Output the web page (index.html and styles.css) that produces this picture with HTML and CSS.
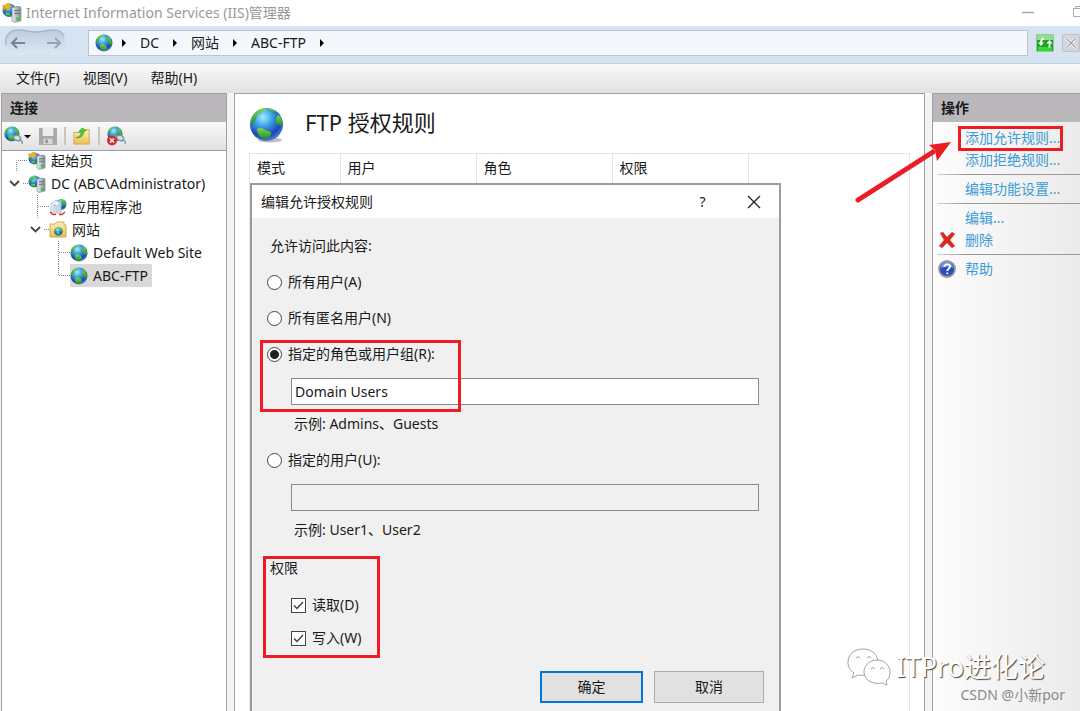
FILE: index.html
```html
<!DOCTYPE html>
<html lang="zh-CN">

<head>
    <meta charset="UTF-8">
    <meta name="viewport" content="width=device-width, initial-scale=1.0">
    <title>Internet Information Services (IIS)管理器</title>
    <link rel="stylesheet" href="styles.css">
</head>

<body>

    <!-- Shared icons -->
    <svg class="sprite" aria-hidden="true">
        <defs>
            <radialGradient id="sea" cx="0.4" cy="0.28" r="0.75">
                <stop offset="0" stop-color="#a5ecff" />
                <stop offset="0.35" stop-color="#3fa5e6" />
                <stop offset="0.75" stop-color="#1b45b4" />
                <stop offset="1" stop-color="#5a86d8" />
            </radialGradient>
            <linearGradient id="land" x1="0" y1="0" x2="0" y2="1">
                <stop offset="0" stop-color="#7fd84a" />
                <stop offset="1" stop-color="#1a8f2c" />
            </linearGradient>
            <linearGradient id="metal" x1="0" y1="0" x2="1" y2="0">
                <stop offset="0" stop-color="#eef2f4" />
                <stop offset="1" stop-color="#7d8b93" />
            </linearGradient>
            <linearGradient id="paper" x1="0" y1="0" x2="0" y2="1">
                <stop offset="0" stop-color="#fff0b0" />
                <stop offset="1" stop-color="#e9bf55" />
            </linearGradient>
        </defs>
        <symbol id="globe-large" viewBox="0 0 36 36">
            <ellipse cx="21" cy="33" rx="12" ry="2.500" fill="#000" opacity="0.25" />
            <circle cx="17.500" cy="17.500" r="16.500" fill="url(#sea)" />
            <path d="M2 13C4 7 8 3 13 1.500L18 2L17 4L13 4L11 7L9 6L8 9L6 14L2 18Z" fill="url(#land)" />
            <path d="M20 1.500L27 4L25 6L21 4Z" fill="url(#land)" />
            <path d="M29 8L32 10L34 17L32 19L28 17L27 12Z" fill="url(#land)" />
            <path d="M8 22C11 20 14 21 16 23L22 25C23 28 19 32 16 32C11 31 8 27 8 22Z" fill="url(#land)" />
        </symbol>
        <symbol id="globe" viewBox="0 0 18 18">
            <circle cx="9" cy="9" r="8.500" fill="url(#sea)" />
            <path d="M1 6C2 3 5 1 8 0.500L7 3L4 4L4 7L2 8L1 11Z" fill="url(#land)" />
            <path d="M12 1.500C15 3 17 6 17 9L16 12L14 10L13 8L11 6L13 4Z" fill="url(#land)" />
            <path d="M5 11L8 10L11 12L12 14L10 17L7 16.500L5 14Z" fill="url(#land)" />
        </symbol>
        <symbol id="server" viewBox="0 0 18 18">
            <circle cx="6.500" cy="6.500" r="6" fill="url(#sea)" />
            <path d="M1 6C1 3 4 1 7 1L7 4L4 5L3 8Z" fill="url(#land)" />
            <path d="M3 9L7 9L8 12L4 12Z" fill="url(#land)" />
            <path d="M9 4L15 3L17 4L17 16L11 17.500L9 16Z" fill="url(#metal)" stroke="#7f8b90" stroke-width="0.7" />
            <path d="M11 7L16 6.500M11 9.500L16 9" stroke="#5f6c72" stroke-width="0.9" />
            <rect x="13" y="13" width="2.500" height="2.500" fill="#39c334" />
        </symbol>
        <symbol id="start" viewBox="0 0 18 18">
            <use href="#server" width="18" height="18" />
            <path d="M0 2L3 2L5 0L7 2L9 2L7 4L7 6L4 5L1 6L2 4Z" fill="#f6b21c" stroke="#d98c0b" stroke-width="0.4" />
        </symbol>
        <symbol id="pool" viewBox="0 0 18 18">
            <circle cx="12" cy="6.500" r="5.500" fill="url(#sea)" />
            <path d="M13 1L17 4L17 8L14 8L12 4Z" fill="url(#land)" />
            <path d="M2 6L7 2L12 6L12 15L2 15Z" fill="#edf4fb" stroke="#9cb3c8" stroke-width="0.8" />
            <path d="M5 14V7H7V14M9 14V7H11V14" fill="#fff" stroke="#8ea2b5" stroke-width="0.8" />
            <path d="M1 14L4 16.500H7M16 14L13 16.500H10" fill="none" stroke="#d33" stroke-width="1.500" />
        </symbol>
        <symbol id="sites" viewBox="0 0 18 18">
            <path d="M1 3H6L8 1H15V4H17V16H1Z" fill="url(#paper)" stroke="#c79b3b" stroke-width="0.8" />
            <use href="#globe" x="5" y="6" width="9" height="9" />
        </symbol>
        <symbol id="connect" viewBox="0 0 20 20">
            <use href="#globe" width="16" height="16" />
            <path d="M9 10L14 9L17 12L15 15L11 14ZM15 14C18 14 19 16 18 18" fill="#d3e2ea" stroke="#7892a0" stroke-width="1.300" />
        </symbol>
        <symbol id="caret" viewBox="0 0 6 10">
            <path d="M1 1L5 5L1 9Z" fill="#000" />
        </symbol>
        <!-- Tree guides: through line, last line, expanded node -->
        <symbol id="guide-first" viewBox="0 0 22 23">
            <path d="M21 11.500H10.500V23" fill="none" stroke="#888" stroke-dasharray="1 1" />
        </symbol>
        <symbol id="guide-mid" viewBox="0 0 22 23">
            <path d="M10.500 0V23M11 11.500H22" fill="none" stroke="#888" stroke-dasharray="1 1" />
        </symbol>
        <symbol id="guide-last" viewBox="0 0 22 23">
            <path d="M10.500 0V11.500H22" fill="none" stroke="#888" stroke-dasharray="1 1" />
        </symbol>
        <symbol id="guide-open" viewBox="0 0 22 23">
            <path d="M4 9L8.500 13.500L13 9" fill="none" stroke="#444" stroke-width="1.800" />
            <path d="M17 11.500H22" stroke="#888" stroke-dasharray="1 1" />
        </symbol>
    </svg>

    <div class="window">
        <header class="title-bar">
            <svg class="icon-app"><use href="#start" /></svg>
            <span class="title-text">Internet Information Services (IIS)管理器</span>
            <svg class="window-buttons" viewBox="0 0 58 26">
                <path d="M0 12.500H12" stroke="#aaa" stroke-width="1.500" />
                <path d="M51.500 8.500H60V16.500H51.500ZM53.500 8V6.500H60" fill="none" stroke="#aaa" />
            </svg>
        </header>

        <nav class="address-bar">
            <svg class="history" viewBox="0 0 64 30">
                <defs>
                    <linearGradient id="historyFill" x1="0" y1="0" x2="0" y2="1">
                        <stop offset="0" stop-color="#bccbdc" />
                        <stop offset="1" stop-color="#dfe9f4" />
                    </linearGradient>
                </defs>
                <path d="M14 2C22 2 24 4 32 4S42 2 50 2C58 2 61 8 61 14S58 27 50 27C42 27 40 25 32 25S22 27 14 27C6 27 1 21 1 14S6 2 14 2Z" fill="url(#historyFill)" />
                <path d="M2 17C0 8 6 2 14 2C22 2 24 4 32 4S42 2 50 2C55 2 58 4 60 8" fill="none" stroke="#a9b6c6" stroke-width="1.500" />
                <path d="M21 15H8M13 10L8 15L13 20" fill="none" stroke="#7c848d" stroke-width="2" />
                <path d="M43 15H56M51 10L56 15L51 20" fill="none" stroke="#9aa4b0" stroke-width="2" />
            </svg>
            <div class="path">
                <svg class="icon"><use href="#globe" /></svg>
                <svg class="caret"><use href="#caret" /></svg>
                <a href="#">DC</a>
                <svg class="caret"><use href="#caret" /></svg>
                <a href="#">网站</a>
                <svg class="caret"><use href="#caret" /></svg>
                <a href="#">ABC-FTP</a>
                <svg class="caret"><use href="#caret" /></svg>
            </div>
            <button type="button" class="tool-button" aria-label="刷新">
                <svg viewBox="0 0 18 18">
                    <rect x="0.500" y="0.500" width="17" height="17" rx="1" fill="#1fa526" stroke="#9fbf9f" />
                    <rect x="1" y="1" width="16" height="5" fill="#8fe08a" />
                    <rect x="2" y="13" width="14" height="4" fill="#2be02b" />
                    <path d="M8 4.500Q5 5 5 9M13 13.500Q14 12 13.500 9" fill="none" stroke="#fff" stroke-width="1.800" />
                    <path d="M2 8.500H8L5 12ZM10.500 9.500H16.500L13.500 6Z" fill="#fff" />
                </svg>
            </button>
            <button type="button" class="tool-button" aria-label="停止">
                <svg viewBox="0 0 18 18">
                    <rect x="0.500" y="0.500" width="17" height="17" rx="1" fill="#d3d5d8" stroke="#bcc1c8" />
                    <path d="M4.500 4.500L13.500 13.500M13.500 4.500L4.500 13.500" stroke="#fff" stroke-width="3" />
                    <path d="M4.500 4.500L13.500 13.500M13.500 4.500L4.500 13.500" stroke="#a5a9ae" stroke-width="1.500" />
                </svg>
            </button>
        </nav>

        <nav class="menu-bar">
            <a href="#">文件(F)</a>
            <a href="#">视图(V)</a>
            <a href="#">帮助(H)</a>
        </nav>

        <div class="content">
            <!-- Connections -->
            <aside class="panel connections">
                <h2 class="panel-title">连接</h2>
                <div class="toolbar">
                    <svg class="icon-wide" viewBox="0 0 28 20">
                        <use href="#connect" width="20" height="20" />
                        <path d="M20 9H27L23.500 12.500Z" fill="#000" />
                    </svg>
                    <svg class="icon-tool" viewBox="0 0 20 20">
                        <path d="M0 1H20V20H0Z" fill="#a9a9a9" />
                        <path d="M4 1H16V10H4Z" fill="#ececec" />
                        <path d="M5 13H15V19H5Z" fill="#d9d9d9" />
                        <path d="M7 14H10V18H7Z" fill="#999" />
                    </svg>
                    <span class="divider"></span>
                    <svg class="icon-tool" viewBox="0 0 20 20">
                        <path d="M1 6H9L11 3H18V19H1Z" fill="url(#paper)" stroke="#d0a850" />
                        <path d="M3 12C7 11 9 9 9 5L6 6L10 1L15 4L12 5C12 10 8 13 3 12Z" fill="#4fc92e" stroke="#2f9f1c" stroke-width="0.6" />
                    </svg>
                    <span class="divider"></span>
                    <svg class="icon-connect" viewBox="0 0 20 20">
                        <use href="#connect" width="20" height="20" />
                        <circle cx="5" cy="14.500" r="5" fill="#d32c2c" />
                        <path d="M3 12.500L7 16.500M7 12.500L3 16.500" stroke="#fff" stroke-width="1.500" />
                    </svg>
                </div>
                <ul class="tree">
                    <li class="node">
                        <svg class="guide"><use href="#guide-first" /></svg>
                        <svg class="icon"><use href="#start" /></svg>
                        <span class="label">起始页</span>
                    </li>
                    <li class="node">
                        <svg class="guide"><use href="#guide-open" /></svg>
                        <svg class="icon"><use href="#server" /></svg>
                        <span class="label">DC (ABC\Administrator)</span>
                    </li>
                    <li class="node level-1">
                        <svg class="guide"><use href="#guide-mid" /></svg>
                        <svg class="icon"><use href="#pool" /></svg>
                        <span class="label">应用程序池</span>
                    </li>
                    <li class="node level-1">
                        <svg class="guide"><use href="#guide-open" /></svg>
                        <svg class="icon"><use href="#sites" /></svg>
                        <span class="label">网站</span>
                    </li>
                    <li class="node level-2">
                        <svg class="guide"><use href="#guide-mid" /></svg>
                        <svg class="icon"><use href="#globe" /></svg>
                        <span class="label">Default Web Site</span>
                    </li>
                    <li class="node level-2">
                        <svg class="guide"><use href="#guide-last" /></svg>
                        <span class="selected">
                            <svg class="icon"><use href="#globe" /></svg>
                            <span class="label">ABC-FTP</span>
                        </span>
                    </li>
                </ul>
            </aside>

            <!-- FTP authorization rules -->
            <main class="panel rules">
                <div class="rules-head">
                    <svg class="icon-large"><use href="#globe-large" /></svg>
                    <h1>FTP 授权规则</h1>
                </div>
                <div class="rules-list">
                    <table>
                        <thead>
                            <tr>
                                <th class="col-mode">模式</th>
                                <th>用户</th>
                                <th>角色</th>
                                <th>权限</th>
                            </tr>
                        </thead>
                    </table>
                </div>

                <form class="dialog" action="#">
                    <div class="dialog-title">
                        <span>编辑允许授权规则</span>
                        <button type="button" aria-label="帮助">?</button>
                        <button type="button" aria-label="关闭">
                            <svg viewBox="0 0 14 14"><path d="M1 1L13 13M13 1L1 13" stroke="#222" stroke-width="1.300" /></svg>
                        </button>
                    </div>
                    <div class="dialog-body">
                        <p class="intro">允许访问此内容:</p>
                        <div class="option">
                            <input type="radio" name="scope" id="allUsers">
                            <label for="allUsers">所有用户(A)</label>
                        </div>
                        <div class="option">
                            <input type="radio" name="scope" id="anonymous">
                            <label for="anonymous">所有匿名用户(N)</label>
                        </div>
                        <div class="option-group">
                            <div class="option">
                                <input type="radio" name="scope" id="roles" checked>
                                <label for="roles">指定的角色或用户组(R):</label>
                            </div>
                            <input type="text" class="field" aria-label="指定的角色或用户组" value="Domain Users">
                            <p class="hint">示例: Admins、Guests</p>
                            <span class="mark mark-roles"></span>
                        </div>
                        <div class="option-group">
                            <div class="option">
                                <input type="radio" name="scope" id="users">
                                <label for="users">指定的用户(U):</label>
                            </div>
                            <input type="text" class="field" aria-label="指定的用户" disabled>
                            <p class="hint">示例: User1、User2</p>
                        </div>
                        <div class="permissions">
                            <p class="intro">权限</p>
                            <div class="option">
                                <input type="checkbox" id="read" checked>
                                <label for="read">读取(D)</label>
                            </div>
                            <div class="option">
                                <input type="checkbox" id="write" checked>
                                <label for="write">写入(W)</label>
                            </div>
                            <span class="mark mark-permissions"></span>
                        </div>
                        <div class="dialog-buttons">
                            <button type="submit" class="primary">确定</button>
                            <button type="button">取消</button>
                        </div>
                    </div>
                </form>
            </main>

            <!-- Actions -->
            <aside class="panel actions">
                <h2 class="panel-title">操作</h2>
                <ul class="action-list">
                    <li><a href="#">添加允许规则...</a><span class="mark mark-action"></span></li>
                    <li><a href="#">添加拒绝规则...</a></li>
                    <li class="separated"><a href="#">编辑功能设置...</a></li>
                    <li class="separated"><a href="#">编辑...</a></li>
                    <li>
                        <svg class="icon" viewBox="0 0 18 18"><path d="M2 2L5 1L9 6L14 1L17 3L12 9L17 15L14 17L9 12L4 17L1 15L6 9Z" fill="#e02420" stroke="#b98a88" stroke-width="0.6" /></svg>
                        <a href="#">删除</a>
                    </li>
                    <li class="separated">
                        <svg class="icon" viewBox="0 0 18 18">
                            <circle cx="9" cy="9" r="8" fill="#2950b8" stroke="#9a9a9a" stroke-width="1.800" />
                            <path d="M3 8A6 6 0 0 1 15 8Q9 5 3 8Z" fill="#7f9de2" />
                            <path d="M6.500 7C6.500 3.500 12 3.500 12 6.500C12 8.500 9.300 8.500 9.300 11M9.300 12.500V14.300" fill="none" stroke="#fff" stroke-width="1.800" />
                        </svg>
                        <a href="#">帮助</a>
                    </li>
                </ul>
                <svg class="arrow" viewBox="0 0 100 66">
                    <path d="M7 59L82 11" stroke="#ed1c24" stroke-width="5" stroke-linecap="round" />
                    <path d="M100 1L78 4L84 9L86 20Z" fill="#ed1c24" />
                </svg>
            </aside>
        </div>

        <div class="watermark">
            <svg viewBox="0 0 44 38">
                <g fill="#fff" stroke="#8a8a8a" stroke-width="0.8">
                    <path d="M16 1C7 1 1 7 1 14C1 19 3 22 7 25L5 30L11 27C20 29 31 24 31 14C31 7 25 1 16 1Z" />
                    <path d="M30 12C22 12 17 18 17 24C17 31 24 37 35 35L40 37L39 33C42 31 43 28 43 24C43 18 38 12 30 12Z" />
                    <path d="M9 10Q11 7 13 10M20 10Q22 7 24 10M24 21Q26 18 28 21M33 21Q35 18 37 21" fill="none" />
                </g>
            </svg>
            <span class="watermark-name">ITPro进化论</span>
            <span class="watermark-author">CSDN @小新por</span>
        </div>
    </div>

</body>

</html>
```
FILE: styles.css
```css
* {
    box-sizing: border-box;
}

body {
    margin: 0;
    font-family: "Noto Sans", "Noto Sans CJK SC", sans-serif;
    font-size: 14px;
    line-height: 20px;
    color: #1a1a1a;
    background-color: #f4f4f4;
}

h1,
h2,
p,
ul {
    margin: 0;
    padding: 0;
    font-weight: normal;
}

ul {
    list-style: none;
}

a {
    color: inherit;
    text-decoration: none;
}

svg {
    display: block;
    flex: none;
}

button,
input {
    font: inherit;
    color: inherit;
}

.sprite {
    position: absolute;
    width: 0;
    height: 0;
}

.icon {
    width: 18px;
    height: 18px;
}

.window {
    position: relative;
    display: flex;
    flex-direction: column;
    height: 100vh;
    overflow: hidden;
}

/* Title bar */
.title-bar {
    display: flex;
    align-items: center;
    height: 26px;
    padding-left: 2px;
    background-color: #fff;
    color: #999;
}

.icon-app {
    width: 20px;
    height: 20px;
}

.title-text {
    flex: 1;
    padding-left: 4px;
}

.window-buttons {
    width: 58px;
    height: 26px;
}

/* Address bar */
.address-bar {
    display: flex;
    align-items: center;
    height: 38px;
    padding: 0 0 3px 4px;
    background-color: #d6e3f1;
    border-bottom: 1px solid #c3d0df;
}

.history {
    width: 64px;
    height: 30px;
}

.path {
    display: flex;
    flex: 1;
    align-items: center;
    gap: 13px;
    height: 26px;
    margin: 0 8px 0 20px;
    padding-left: 6px;
    background-color: #f4f8fd;
    border: 1px solid #b9c5d6;
}

.path .icon {
    margin-right: -5px;
}

.caret {
    width: 6px;
    height: 10px;
}

.tool-button {
    margin-right: 8px;
    padding: 0;
    background: none;
    border: none;
}

.tool-button:last-child {
    margin-right: 0;
}

.tool-button svg {
    width: 18px;
    height: 18px;
}

/* Menu bar */
.menu-bar {
    display: flex;
    align-items: center;
    gap: 23px;
    height: 29px;
    padding: 0 0 2px 16px;
    background: linear-gradient(#fafafa, #e2e0e1);
}

/* Panels */
.content {
    display: grid;
    flex: 1;
    grid-template-columns: 226px 1fr 148px;
    gap: 7px;
    min-height: 0;
    padding-left: 1px;
}

.panel {
    position: relative;
    background-color: #fff;
    border: 1px solid #a0a0a0;
    border-bottom: none;
}

.panel-title {
    height: 28px;
    padding-left: 8px;
    background-color: #bab8ba;
    font-size: 14px;
    font-weight: bold;
    line-height: 28px;
}

.toolbar {
    display: flex;
    align-items: center;
    gap: 7px;
    height: 29px;
    padding-left: 2px;
    background: linear-gradient(#fafafa, #e2e0e1);
    border-bottom: 1px solid #9a9ab0;
}

.icon-wide {
    width: 28px;
    height: 20px;
}

.icon-tool {
    width: 18px;
    height: 18px;
}

.icon-connect {
    width: 20px;
    height: 20px;
}

.divider {
    width: 2px;
    height: 18px;
    background-color: #c9c7b8;
}

/* Tree */
.tree {
    margin-top: -2px;
}

.node {
    display: flex;
    align-items: center;
    height: 23px;
    padding-left: 4px;
}

.level-1 {
    padding-left: 25px;
}

.level-2 {
    padding-left: 46px;
}

.guide {
    width: 22px;
    height: 23px;
}

.label {
    padding-left: 5px;
    white-space: nowrap;
}

.selected {
    display: flex;
    align-items: center;
    height: 23px;
    padding-right: 4px;
    background-color: #d9d9d9;
}

/* Rules */
.rules {
    overflow: hidden;
}

.rules-head {
    display: flex;
    gap: 20px;
    height: 59px;
    padding: 13px 0 0 14px;
}

.icon-large {
    width: 36px;
    height: 36px;
}

.rules-head h1 {
    font-size: 22px;
    line-height: 30px;
}

.rules-list {
    height: 100%;
    margin: 0 14px;
    border: 1px solid #e5e5e5;
}

table {
    border-collapse: collapse;
}

th {
    width: 136px;
    height: 29px;
    padding: 0 7px;
    border-right: 1px solid #e5e5e5;
    border-bottom: 1px solid #d5d5d5;
    font-weight: normal;
    text-align: left;
}

.col-mode {
    width: 90px;
}

/* Dialog */
.dialog {
    position: absolute;
    top: 89px;
    right: 143px;
    bottom: -8px;
    left: 15px;
    background-color: #f0f0f0;
    border: 2px solid #9c9c9c;
}

.dialog-title {
    display: flex;
    align-items: center;
    gap: 20px;
    height: 33px;
    padding: 0 10px 0 9px;
    background-color: #fff;
}

.dialog-title span {
    flex: 1;
}

.dialog-title button {
    display: flex;
    align-items: center;
    justify-content: center;
    width: 31px;
    height: 30px;
    padding: 0;
    background: none;
    border: none;
}

.dialog-title svg {
    width: 14px;
    height: 14px;
}

.dialog-body {
    padding: 18px 15px 0;
}

.intro {
    padding-left: 3px;
}

.option {
    display: flex;
    align-items: center;
    gap: 6px;
    margin-top: 16px;
}

.option input {
    flex: none;
    width: 15px;
    height: 15px;
    margin: 0;
    appearance: none;
    background-color: #fff;
    border: 1px solid #444;
}

.option input[type="radio"] {
    border-radius: 50%;
}

.option input[type="radio"]:checked {
    background-image: radial-gradient(circle, #222 4px, #fff 5px);
}

.option input[type="checkbox"]:checked {
    background-image: url("data:image/svg+xml,%3Csvg xmlns='http://www.w3.org/2000/svg' viewBox='0 0 13 13'%3E%3Cpath d='M2 6.500L5 9.500L11 3' fill='none' stroke='%23444' stroke-width='1.500'/%3E%3C/svg%3E");
}

.option-group {
    position: relative;
    padding-right: 5px;
}

.field {
    display: block;
    width: calc(100% - 24px);
    height: 27px;
    margin: 14px 0 9px 24px;
    padding: 0 3px;
    background-color: #fff;
    border: 1px solid #8a8a8a;
    border-radius: 0;
}

.field:disabled {
    background-color: #f0f0f0;
}

.hint {
    padding-left: 27px;
}

.permissions {
    position: relative;
    margin-top: 18px;
}

.permissions .option {
    margin: 13px 0 0 24px;
}

.permissions .intro + .option {
    margin-top: 17px;
}

.dialog-buttons {
    display: flex;
    justify-content: flex-end;
    gap: 11px;
    margin-top: 23px;
}

.dialog-buttons button {
    width: 110px;
    height: 32px;
    padding: 0;
    background-color: #e1e1e1;
    border: 1px solid #adadad;
}

.dialog-buttons .primary {
    width: 103px;
    border: 2px solid #0078d7;
}

/* Actions */
.actions {
    background: linear-gradient(90deg, #fcfcfc, #ebebeb);
    border-right: none;
}

.action-list {
    padding-top: 5px;
}

.action-list li {
    position: relative;
    display: flex;
    align-items: center;
    justify-content: flex-start;
    height: 22px;
    padding-left: 32px;
    color: #3c9bd6;
    white-space: nowrap;
}

.action-list .icon {
    margin: 0 9px 0 -27px;
}

.action-list .separated {
    margin-top: 7px;
}

.action-list .separated::before {
    content: "";
    position: absolute;
    top: -4px;
    right: 0;
    left: 4px;
    height: 1px;
    background: linear-gradient(90deg, #d5d5d5, #999 20%);
}

/* Red marks over the controls */
.mark {
    position: absolute;
    border: 3px solid #ed1c24;
    pointer-events: none;
}

.mark-roles {
    top: -4px;
    left: -7px;
    width: 201px;
    height: 72px;
}

.mark-permissions {
    top: -2px;
    left: -4px;
    width: 117px;
    height: 102px;
}

.mark-action {
    top: -1px;
    left: 25px;
    width: 105px;
    height: 25px;
}

.arrow {
    position: absolute;
    top: 47px;
    left: -82px;
    width: 100px;
    height: 66px;
}

/* Watermark */
.watermark {
    position: absolute;
    right: 15px;
    bottom: 7px;
    display: grid;
    grid-template-columns: 44px auto;
    column-gap: 6px;
    align-items: center;
}

.watermark svg {
    width: 44px;
    height: 38px;
}

.watermark-name {
    padding-right: 20px;
    color: #fff;
    font-size: 27px;
    line-height: 36px;
    text-shadow: 1px 1px 1px #444;
}

.watermark-author {
    grid-column: 1 / 3;
    color: #8a8a8a;
    font-size: 14px;
    line-height: 18px;
    text-align: right;
}
```
